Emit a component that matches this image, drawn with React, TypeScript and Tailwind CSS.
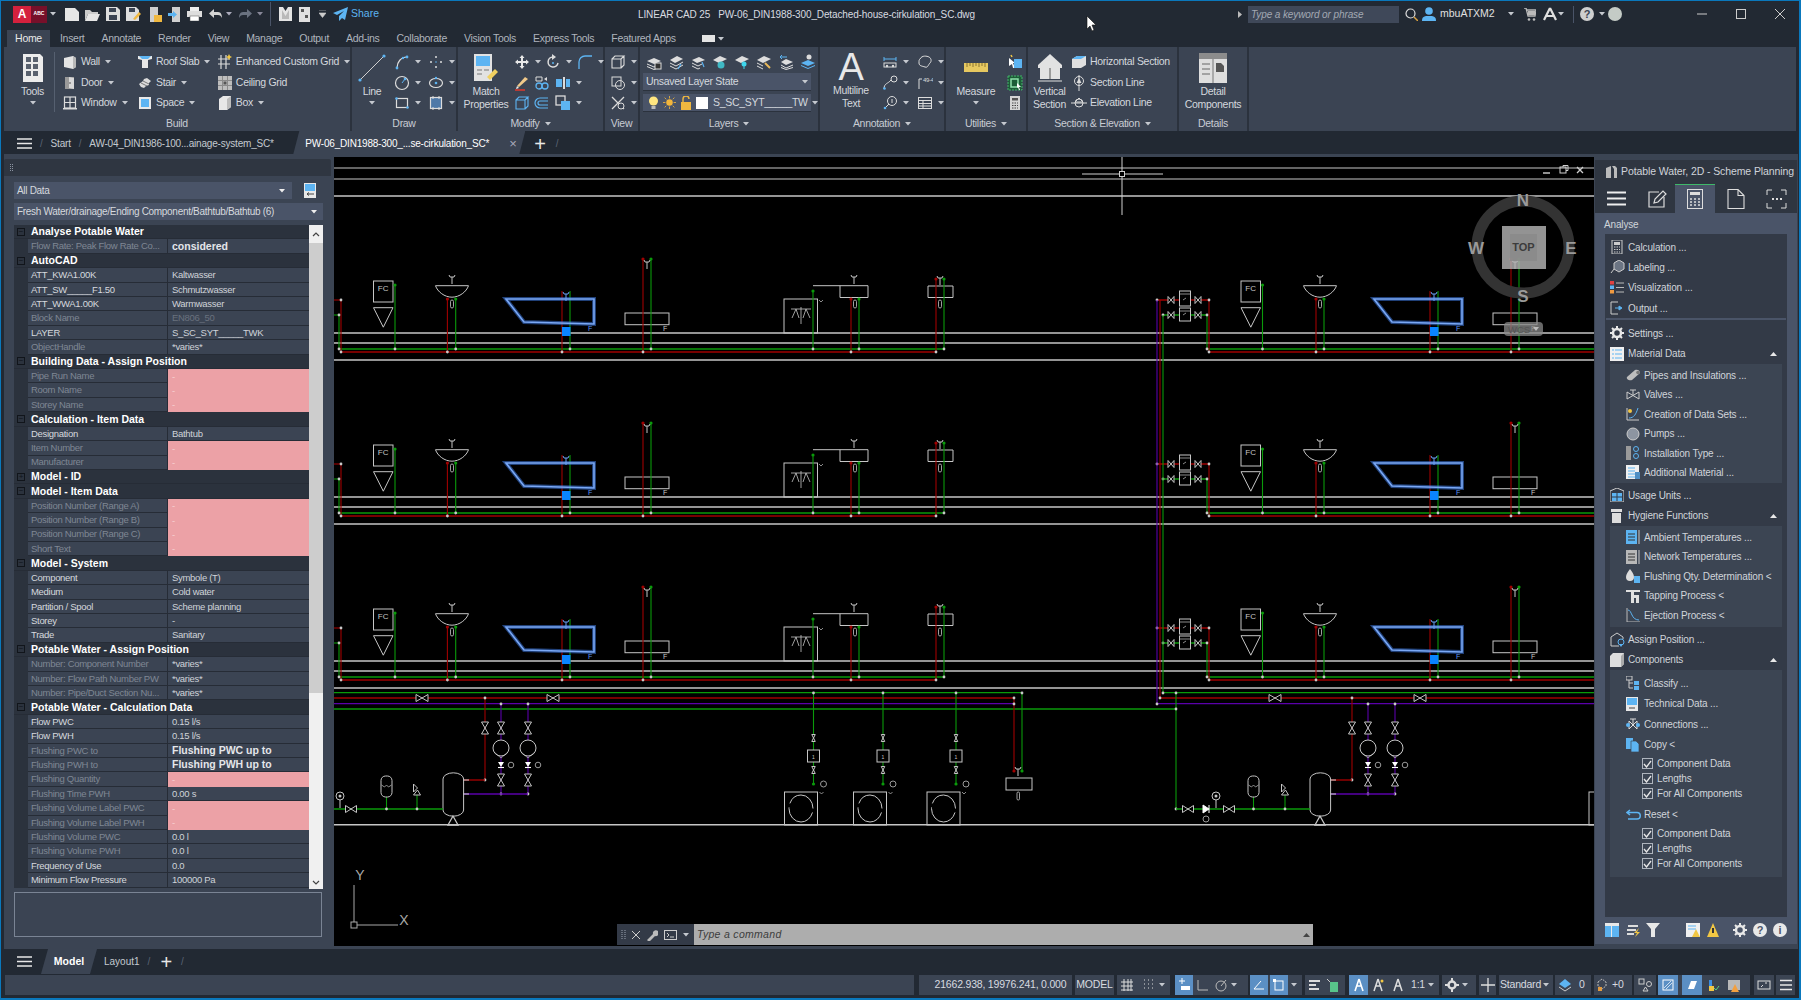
import React from 'react';

type P = { children?: React.ReactNode; w?: number; h?: number; vb?: string };
const S = ({ children, w = 16, h = 16, vb = '0 0 16 16' }: P) => (
  <svg width={w} height={h} viewBox={vb} className="shrink-0 block">{children}</svg>
);
const Arrow = ({ c = '#c5c9cf' }: { c?: string }) => (
  <svg width="6" height="4" viewBox="0 0 6 4" className="shrink-0"><path d="M0 0h6L3 3.5z" fill={c} /></svg>
);
const L = '#dcdcdc';
const B = '#5db4f2';
const st = { fill: 'none', stroke: L, strokeWidth: 1.2 };

const ic: Record<string, React.ReactNode> = {
  wall: <S><path d="M2 4l9-2 3 2v9l-3 2-9-2z" fill="#e4e4e4" /><path d="M11 2l3 2v9l-3 2z" fill="#b8b8b8" /></S>,
  door: <S><rect x="3" y="2" width="9" height="12" fill="#9a9a9a" /><path d="M7 2l5 1v11l-5-1z" fill="#d8d8d8" /><circle cx="8" cy="8" r=".8" fill="#444" /></S>,
  window: <S><rect x="2.5" y="2" width="11" height="11" {...st} /><path d="M2.5 7.5h11M8 2v11" {...st} /><rect x="1" y="13" width="14" height="1.5" fill={L} /></S>,
  roof: <S><path d="M1 2h14v3l-4 1v8H5V6L1 5z" fill="#e8e8e8" /><path d="M2 2h12l-3 3H5z" fill={B} /></S>,
  stair: <S><path d="M2 9l4-3 1-2 3-1 4 3-2 2v2l-3 1-2 2-3-1z" fill="#dcdcdc" /><path d="M4 8l6 3M6 6l6 3" stroke="#777" /></S>,
  space: <S><rect x="2" y="2" width="12" height="12" fill="#e8e8e8" /><rect x="4" y="4" width="8" height="8" fill={B} /></S>,
  grid: <S><path d="M1 5h12M1 10h12M4 1v14M9 1v14" {...st} /><path d="M12 0l1 2 2 1-2 1-1 2-1-2-2-1 2-1z" fill="#f2c744" /></S>,
  ceil: <S><rect x="1" y="1" width="14" height="14" fill="#bdbdbd" /><path d="M5.500 1v14M10.500 1v14M1 5.500h14M1 10.500h14" stroke="#8a8a8a" /><rect x="6.500" y="6.500" width="3" height="3" fill="#555" /></S>,
  box: <S><path d="M2 4l4-3h8v11l-4 3H2z" fill="#e8e8e8" /><path d="M10 4l4-3v11l-4 3z" fill="#bdbdbd" /></S>,
  poly: <S><path d="M3 14C3 8 7 3 13 3" {...st} /><circle cx="3" cy="14" r="1.4" fill={B} /><circle cx="9" cy="4" r="1.2" fill={B} /><circle cx="13" cy="3" r="1.4" fill={B} /></S>,
  pts: <S><circle cx="8" cy="3" r="1" fill={L} /><circle cx="3" cy="8" r="1" fill={L} /><circle cx="13" cy="8" r="1" fill={L} /><circle cx="8" cy="13" r="1" fill={L} /><circle cx="8" cy="8" r=".8" fill={B} /></S>,
  circ: <S><circle cx="8" cy="8" r="6.500" {...st} /><path d="M8 8l3-4" stroke={B} /><circle cx="11" cy="4" r="1.300" fill={B} /></S>,
  elli: <S><ellipse cx="8" cy="8" rx="6.500" ry="4.500" {...st} /><circle cx="8" cy="8" r="1.300" fill={B} /><circle cx="8" cy="3" r="1.200" fill={B} /></S>,
  rect: <S><rect x="2.500" y="3.500" width="11" height="9" {...st} /><circle cx="2.500" cy="3.500" r="1.300" fill={B} /><circle cx="13.500" cy="12.500" r="1.300" fill={B} /></S>,
  hatch: <S><rect x="3" y="3" width="10" height="10" fill="#4f79a8" /><rect x="2.500" y="2.500" width="11" height="11" {...st} /><path d="M5 1v3M11 1v3M5 12v3M11 12v3" stroke={L} /></S>,
  move: <S><path d="M8 1l2.500 3H9v3h3V5.500L15 8l-3 2.500V9H9v3h1.500L8 15l-2.500-3H7V9H4v1.500L1 8l3-2.500V7h3V4H5.500z" fill="#e8e8e8" /></S>,
  rot: <S><path d="M13 9a5 5 0 1 1-5-6" fill="none" stroke={L} strokeWidth="1.500" /><path d="M7 0l4 3-4 3z" fill={L} /><circle cx="8" cy="9" r="1" fill={B} /></S>,
  fil: <S><path d="M2 15V8a6 6 0 0 1 6-6h7" fill="none" stroke={B} strokeWidth="1.300" /></S>,
  pencil: <S><path d="M3 11l8-9 3 2-9 8z" fill="#f0c98a" /><path d="M1 15h10" stroke="#e0392b" strokeWidth="1.500" /><path d="M3 11l-1 3 3-1z" fill="#eee" /></S>,
  mir: <S><circle cx="5" cy="11" r="3" fill="none" stroke={B} strokeWidth="1.300" /><circle cx="11" cy="11" r="3" fill="none" stroke={B} strokeWidth="1.300" /><path d="M2 2h6v4H2z" fill="none" stroke={L} /><path d="M10 4l3-2v4z" fill={L} /></S>,
  str: <S><rect x="1" y="4" width="6" height="8" fill={B} /><rect x="8" y="2" width="2" height="12" fill={L} /><rect x="11" y="4" width="4" height="8" fill={B} /></S>,
  cube: <S><path d="M2 5h9v9H2zM2 5l3-3h9l-3 3M14 2v9l-3 3" fill="none" stroke={B} strokeWidth="1.100" /></S>,
  off: <S><path d="M14 3H6a5 5 0 0 0 0 10h8M14 6H6a2 2 0 0 0 0 4h8" fill="none" stroke={B} strokeWidth="1.200" /></S>,
  copy: <S><rect x="1" y="1" width="9" height="9" fill="none" stroke={L} strokeWidth="1.300" /><rect x="6" y="6" width="9" height="9" fill={B} /></S>,
  vcube: <S><path d="M2 5h9v9H2zM2 5l3-3h9l-3 3M14 2v9l-3 3" fill="none" stroke={L} strokeWidth="1.100" /></S>,
  vorb: <S><rect x="2" y="2" width="9" height="9" fill="none" stroke={L} /><circle cx="10" cy="10" r="4.500" fill="none" stroke={L} /></S>,
  vx: <S><path d="M2 2l12 12M14 2L2 14" stroke={L} strokeWidth="1.300" /><circle cx="11" cy="11" r="3" fill="#3b4453" stroke={L} /></S>,
  lay1: <S><path d="M1 7l7-3 7 3-7 3z" fill="#ddd" /><path d="M1 10l7 3 7-3M1 12.500l7 3 7-3" fill="none" stroke="#ddd" /><rect x="9" y="9" width="6" height="6" fill="#333" stroke="#ddd" /></S>,
  lay2: <S><path d="M2 6l7-4 6 3-8 4z" fill="#ddd" /><path d="M2 9l6 3 7-4M2 12l6 3 7-4" fill="none" stroke="#ddd" /><path d="M13 10l-3 5" stroke={B} strokeWidth="1.200" /></S>,
  lay3: <S><path d="M2 6l7-3 6 3-8 3z" fill="#ddd" /><path d="M2 9l6 3 4-2M2 12l6 3 2-1" fill="none" stroke="#ddd" /><path d="M12 8l2 5" stroke={B} strokeWidth="1.200" /></S>,
  lay4: <S><path d="M1 6l7-4 7 3-8 4z" fill="#ddd" /><circle cx="9" cy="11" r="3.500" fill="#3fb8c4" /></S>,
  lay5: <S><path d="M1 6l7-4 7 3-8 4z" fill="#ddd" /><circle cx="10" cy="10" r="2.500" fill="#3fd6ec" /><path d="M10 12v3" stroke="#3fd6ec" /></S>,
  lay6: <S><path d="M1 6l7-4 7 3-8 4z" fill="#ddd" /><path d="M1 9l6 3M1 12l6 3" stroke="#ddd" /><path d="M9 9l5 5" stroke="#e9b95b" strokeWidth="2" /></S>,
  lay7: <S><path d="M3 8l5-3 7 3-7 3z" fill="#ddd" /><path d="M3 11l5 3 7-3M3 13.500l5 2 7-2" fill="none" stroke="#ddd" /><path d="M2 3h7M2 3l2-2M2 3l2 2" stroke={B} fill="none" /></S>,
  lay8: <S><circle cx="9" cy="3" r="2.500" fill={L} /><path d="M1 9l7-3 7 3-7 3z" fill={B} /><path d="M1 11.500l7 3 7-3" fill="none" stroke={B} /></S>,
  dim: <S><path d="M2 5h12M2 3v4M14 3v4" stroke={B} fill="none" /><rect x="2" y="9" width="12" height="4" fill="none" stroke={L} /><circle cx="5" cy="12" r="1.200" fill={L} /><circle cx="11" cy="12" r="1.200" fill={L} /></S>,
  rev: <S><path d="M3 5c2-4 7-3 9-2s3 4 1 6-2 5-5 4-6-1-6-4 0-3 1-4z" fill="none" stroke={L} /></S>,
  lead: <S><path d="M2 14C2 8 6 9 9 5" fill="none" stroke={L} /><circle cx="2.500" cy="13.500" r="1.300" fill={B} /><circle cx="12" cy="4" r="3" fill="none" stroke={L} /></S>,
  tag: <S><path d="M2 14V4M2 4h3" stroke={L} fill="none" /><text x="6" y="7" fontSize="6" fill={L}>49-4</text></S>,
  ball: <S><circle cx="10" cy="6" r="4.500" fill="none" stroke={L} /><path d="M7 9l-4 4M10 4v4" stroke={L} /><circle cx="3" cy="13" r="1.300" fill={B} /></S>,
  table: <S><rect x="1.500" y="2.500" width="13" height="11" fill="none" stroke={L} /><path d="M1.500 5.500h13M1.500 8.500h13M1.500 11h13M6 5.500v8" stroke={L} /></S>,
  calc: <S><rect x="3" y="1" width="10" height="14" fill="#d4d4d4" /><rect x="5" y="3" width="6" height="2.500" fill="#555" /><path d="M5 8h1.500M7.500 8H9M10 8h1M5 10.500h1.500M7.500 10.500H9M10 10.500h1M5 13h1.500M7.500 13H9M10 13h1" stroke="#444" /></S>,
  cur1: <S><path d="M2 4l6 5-2 0 2 5-2 0-1-4-3 2z" fill="#fff" /><rect x="7" y="5" width="8" height="9" fill={B} /><path d="M4 1l1 2" stroke="#f2c744" strokeWidth="1.500" /></S>,
  cur2: <S><rect x="1" y="1" width="14" height="14" fill="#1c5d37" stroke="#45b36b" strokeDasharray="2 1" /><rect x="4" y="4" width="7" height="8" fill="none" stroke="#8fe0ac" strokeWidth="1.500" /><path d="M10 8l4 4-2 0 1 3-1 0-1-3-1 1z" fill="#fff" /></S>,
  hs: <S><path d="M1 5l5-3h9v9l-5 3H1z" fill="#dfdfdf" /><path d="M1 5l5-3h9l-5 3z" fill={B} /></S>,
  sl: <S><circle cx="8" cy="6" r="4.500" fill="none" stroke={L} /><path d="M8 0v16" stroke={L} /><path d="M8 3l2.500 5h-5z" fill={L} /></S>,
  el: <S><circle cx="8" cy="8" r="4" fill="none" stroke={L} /><path d="M0 8h16M8 3l-4 4h8z" stroke={L} fill="none" /></S>,
  hamb: <svg width="15" height="11" viewBox="0 0 15 11" className="shrink-0"><path d="M0 1h15M0 5.500h15M0 10h15" stroke="#e8e8e8" strokeWidth="1.500" /></svg>,
};

const Tool = ({ i, t, arrow, cls = '' }: { i: React.ReactNode; t: string; arrow?: boolean; cls?: string }) => (
  <div className={`flex items-center h-[20.5px] whitespace-nowrap ${cls}`}>
    {i}<span className="ml-[3px]">{t}</span>{arrow && <span className="ml-[5px]"><Arrow /></span>}
  </div>
);
const Cell = ({ i, a, cls = 'w-[20px]' }: { i: React.ReactNode; a?: boolean; cls?: string }) => (
  <div className={`flex items-center h-[20.5px] ${cls}`}>{i}{a && <span className="ml-[5px]"><Arrow /></span>}</div>
);
const Big = ({ i, t, cls, a }: { i: React.ReactNode; t: string[]; cls: string; a?: boolean }) => (
  <div className={`flex flex-col items-center shrink-0 leading-[13px] ${cls}`}>
    <div className="h-[31px] flex items-center justify-center">{i}</div>
    <div className="mt-[2px] text-center whitespace-nowrap">{t.map((x) => <div key={x}>{x}</div>)}</div>
    {a && <div className="mt-[3px]"><Arrow /></div>}
  </div>
);
const Panel = ({ cls, label, arrow, children }: { cls: string; label: string; arrow?: boolean; children?: React.ReactNode }) => (
  <div className={`flex flex-col shrink-0 border-r-[2px] border-[#2b323d] ${cls}`}>
    <div className="h-[69px] flex pt-[5px]">{children}</div>
    <div className="h-[15px] flex items-center justify-center text-[#c8ccd3] gap-[5px]">{label}{arrow && <Arrow />}</div>
  </div>
);

function Ribbon() {
  return (
    <div className="h-[84px] ml-[3px] mr-[3px] bg-[#3b4453] flex text-[10.500px] tracking-[-0.3px] text-[#d4d8de] shrink-0">
      <Panel cls="w-[348px]" label="Build">
        <Big cls="w-[47px] pl-[10px]" t={['Tools']} a i={<S w={22} h={30} vb="0 0 22 30"><path d="M1 1h17l3 3v25H1z" fill="#ececec" /><path d="M4 4h5v5H4zM11 4h5v5h-5zM4 11h5v5H4zM11 11h5v5h-5zM4 18h5v5H4zM11 18h5v5h-5z" fill="#59616e" /></S>} />
        <div className="w-px h-[60px] bg-[#566070] mr-[7px] ml-[3px]" />
        <div className="w-[75px]">
          <Tool i={ic.wall} t="Wall" arrow /><Tool i={ic.door} t="Door" arrow /><Tool i={ic.window} t="Window" arrow />
        </div>
        <div className="w-[80px]">
          <Tool i={ic.roof} t="Roof Slab" arrow /><Tool i={ic.stair} t="Stair" arrow /><Tool i={ic.space} t="Space" arrow />
        </div>
        <div>
          <Tool i={ic.grid} t="Enhanced Custom Grid" arrow /><Tool i={ic.ceil} t="Ceiling Grid" /><Tool i={ic.box} t="Box" arrow />
        </div>
      </Panel>
      <Panel cls="w-[106px]" label="Draw">
        <Big cls="w-[40px]" t={['Line']} a i={<S w={28} h={28} vb="0 0 28 28"><path d="M2 26L26 2" stroke="#cfcfcf" /><circle cx="2" cy="26" r="1.600" fill={B} /><circle cx="26" cy="2" r="1.600" fill={B} /></S>} />
        <div className="w-[34px] ml-[2px]"><Cell cls="w-[34px]" i={ic.poly} a /><Cell cls="w-[34px]" i={ic.circ} a /><Cell cls="w-[34px]" i={ic.rect} a /></div>
        <div className="w-[28px]"><Cell cls="w-[28px]" i={ic.pts} a /><Cell cls="w-[28px]" i={ic.elli} a /><Cell cls="w-[28px]" i={ic.hatch} a /></div>
      </Panel>
      <Panel cls="w-[147px]" label="Modify" arrow>
        <Big cls="w-[56px]" t={['Match', 'Properties']} i={<S w={26} h={30} vb="0 0 26 30"><rect x="1" y="1" width="18" height="27" fill="#e2e2e2" /><rect x="3" y="3" width="14" height="10" fill={B} /><path d="M4 17h5M4 21h5M11 17h5" stroke="#777" /><path d="M14 24l8-8 3 3-8 8z" fill="#f0d060" /></S>} />
        <div>
          <div className="flex"><Cell cls="w-[31px]" i={ic.move} a /><Cell cls="w-[32px]" i={ic.rot} a /><Cell cls="w-[24px]" i={ic.fil} a /></div>
          <div className="flex"><Cell cls="w-[20px]" i={ic.pencil} /><Cell cls="w-[21px]" i={ic.mir} /><Cell i={ic.str} a /></div>
          <div className="flex"><Cell cls="w-[20px]" i={ic.cube} /><Cell cls="w-[21px]" i={ic.off} /><Cell i={ic.copy} a /></div>
        </div>
      </Panel>
      <Panel cls="w-[35px]" label="View">
        <div className="ml-[5px]"><Cell i={ic.vcube} a /><Cell i={ic.vorb} a /><Cell i={ic.vx} a /></div>
      </Panel>
      <Panel cls="w-[180px]" label="Layers" arrow>
        <div className="ml-[3px]">
          <div className="flex h-[20px] items-center pl-[3px] gap-[6px]">{[ic.lay1, ic.lay2, ic.lay3, ic.lay4, ic.lay5, ic.lay6, ic.lay7, ic.lay8].map((x, k) => <span key={k}>{x}</span>)}</div>
          <div className="w-[168px] h-[18px] mt-px bg-[#4a5468] border-b border-[#2b323d] flex items-center justify-between px-[3px]"><span>Unsaved Layer State</span><Arrow /></div>
          <div className="w-[168px] h-[18px] mt-[3px] bg-[#4a5468] border-b border-[#2b323d] flex items-center pl-[5px] pr-[3px] gap-[4px]">
            <S w={11} h={14} vb="0 0 11 14"><circle cx="5.500" cy="5" r="4.500" fill="#ffe680" /><rect x="3.500" y="10" width="4" height="3" fill="#bbb" /></S>
            <S w={13} h={13} vb="0 0 16 16"><circle cx="8" cy="8" r="4" fill="#f2b63c" /><path d="M8 0v3M8 13v3M0 8h3M13 8h3M2 2l2 2M12 12l2 2M2 14l2-2M12 4l2-2" stroke="#f2b63c" /></S>
            <S w={12} h={14} vb="0 0 12 14"><rect x="1" y="6" width="10" height="8" fill="#f0b840" /><path d="M3 6V3a3 3 0 0 1 6 0" fill="none" stroke="#f0b840" strokeWidth="1.400" /></S>
            <div className="w-[12px] h-[12px] bg-white shrink-0" /><span className="flex-1 ml-px whitespace-nowrap">S_SC_SYT_____TW</span><Arrow />
          </div>
        </div>
      </Panel>
      <Panel cls="w-[126px]" label="Annotation" arrow>
        <div className="w-[62px] flex flex-col items-center">
          <div className="h-[31px] text-[38px] leading-[31px] text-[#e8e8e8]">A</div>
          <div className="text-center leading-[13px] mt-[1px]"><div>Multiline</div><div>Text</div></div>
        </div>
        <div className="w-[35px]"><Cell cls="w-[35px]" i={ic.dim} a /><Cell cls="w-[35px]" i={ic.lead} a /><Cell cls="w-[35px]" i={ic.ball} a /></div>
        <div><Cell i={ic.rev} a /><Cell i={ic.tag} a /><Cell i={ic.table} a /></div>
      </Panel>
      <Panel cls="w-[82px]" label="Utilities" arrow>
        <Big cls="w-[60px]" t={['Measure']} a i={<S w={24} h={9} vb="0 0 24 9"><rect width="24" height="9" fill="#e6c860" /><path d="M3 0v4M6 0v3M9 0v4M12 0v3M15 0v4M18 0v3M21 0v4" stroke="#8a7430" /></S>} />
        <div className="ml-[1px]"><Cell i={ic.cur1} /><Cell i={ic.cur2} /><Cell i={ic.calc} /></div>
      </Panel>
      <Panel cls="w-[151px]" label="Section & Elevation" arrow>
        <Big cls="w-[43px]" t={['Vertical', 'Section']} i={<S w={26} h={30} vb="0 0 26 30"><path d="M13 1L25 12v3H1v-3z" fill="#e2e2e2" /><rect x="3" y="15" width="20" height="11" fill="#e2e2e2" /><path d="M13 15v11" stroke="#555" /><path d="M1 28h24" stroke="#e2e2e2" /></S>} />
        <div><Tool i={ic.hs} t="Horizontal Section" /><Tool i={ic.sl} t="Section Line" /><Tool i={ic.el} t="Elevation Line" /></div>
      </Panel>
      <Panel cls="w-[70px]" label="Details">
        <Big cls="w-[68px]" t={['Detail', 'Components']} i={<S w={28} h={30} vb="0 0 28 30"><rect x="0" y="0" width="28" height="30" fill="#dedede" /><rect width="28" height="6" fill="#8c8c8c" /><path d="M3 11h8M3 16h8M3 21h8" stroke="#666" /><path d="M14 6v24" stroke="#777" /><path d="M17 10h5l3 3v6h-8z" fill="#555" /></S>} />
      </Panel>
      <div className="flex-1" />
    </div>
  );
}

const TB = ({ w, children }: { w: string; children: React.ReactNode }) => <div className={`${w} flex justify-center items-center shrink-0`}>{children}</div>;

function TitleBar() {
  return (
    <div className="h-[29px] flex items-center shrink-0 text-[11px] text-[#d4d8de] pl-[12px] pb-[3px]">
      <div className="w-[34px] h-[17px] flex shrink-0">
        <div className="w-[18px] bg-[#d4213d] flex items-center justify-center text-white font-bold text-[12px]">A</div>
        <div className="w-[16px] bg-[#76102a] text-white text-[5px] font-bold flex items-center justify-center">ABC</div>
      </div>
      <TB w="w-[12px]"><Arrow /></TB>
      <TB w="w-[20px] ml-[3px]"><S w={14} h={13} vb="0 0 14 13"><path d="M0 0h10l4 4v9H0z" fill="#e6e6e6" /></S></TB>
      <TB w="w-[20px]"><S w={15} h={13} vb="0 0 15 13"><path d="M0 2h5l2 2h6v2H3l-3 7z" fill="#ccc" /><path d="M3 6h12l-3 7H0z" fill="#e6e6e6" /></S></TB>
      <TB w="w-[20px] ml-[1px]"><S w={14} h={14} vb="0 0 14 14"><path d="M0 0h11l3 3v11H0z" fill="#dedede" /><rect x="3" y="1" width="7" height="4" fill="#3b4453" /><rect x="3" y="8" width="8" height="5" fill="#3b4453" /></S></TB>
      <TB w="w-[20px]"><S w={15} h={14} vb="0 0 15 14"><path d="M0 0h10l3 3v11H0z" fill="#dedede" /><rect x="3" y="1" width="6" height="4" fill="#3b4453" /><path d="M7 12l6-7 2 2-6 6z" fill="#f0b840" /></S></TB>
      <TB w="w-[20px] ml-[2px]"><S w={13} h={15} vb="0 0 13 15"><rect x="1" y="0" width="8" height="15" fill="#d0d0d0" /><path d="M5 8h8v7H5z" fill="#f0b840" /></S></TB>
      <TB w="w-[20px] -ml-[1px]"><S w={13} h={15} vb="0 0 13 15"><rect x="4" y="0" width="8" height="15" fill="#d0d0d0" /><path d="M0 6h5V4l4 3.500-4 3.500V9H0z" fill={B} /></S></TB>
      <TB w="w-[20px]"><S w={15} h={14} vb="0 0 15 14"><rect x="3" y="0" width="9" height="4" fill="#eee" /><rect x="0" y="4" width="15" height="6" fill="#ddd" /><rect x="3" y="9" width="9" height="5" fill="#fff" stroke="#555" strokeWidth=".5" /></S></TB>
      <TB w="w-[20px] ml-[1px]"><S w={13} h={10} vb="0 0 13 10"><path d="M5 0v3h4c3 0 4 3 4 6-1-2-2-3-4-3H5v3L0 4.500z" fill="#d4d4d4" /></S></TB>
      <TB w="w-[12px] -ml-[2px]"><Arrow c="#aab" /></TB>
      <TB w="w-[20px]"><S w={13} h={10} vb="0 0 13 10"><path d="M8 0v3H4C1 3 0 6 0 9c1-2 2-3 4-3h4v3l5-4.500z" fill="#6a7280" /></S></TB>
      <TB w="w-[12px] -ml-[1px]"><Arrow c="#889" /></TB>
      <div className="w-px h-[24px] bg-[#4a5468] ml-[4px] mr-[7px]" />
      <TB w="w-[14px]"><S w={13} h={14} vb="0 0 13 14"><path d="M0 0h4l2.500 4L9 0h4v14H0z" fill="#e4e4e4" /><path d="M3 3l3.500 6L10 3v9H3z" fill="#555" opacity=".3" /></S></TB>
      <TB w="w-[26px] -ml-[1px]"><S w={11} h={15} vb="0 0 11 15"><path d="M0 0h11v15H0z" fill="#e0e0e0" /><rect x="2" y="2" width="3" height="3" fill="#555" /><rect x="6" y="8" width="3" height="3" fill="#555" /></S></TB>
      <TB w="w-[10px]"><S w={7} h={8} vb="0 0 7 8"><path d="M0 0h7M0 3h7L3.500 7.500z" fill="#ccc" stroke="#ccc" strokeWidth=".6" /></S></TB>
      <div className="ml-[6px] flex items-center gap-[3px] text-[#5db4f2] text-[10.500px]"><S w={15} h={14} vb="0 0 15 14"><path d="M15 0L0 6l4 2 7-4-5 5v5l3-3 3 2z" fill={B} /></S><span>Share</span></div>
      <div className="absolute left-[637px] top-[6px] text-[10px] text-[#d8dbe0] whitespace-pre tracking-[-0.13px]">LINEAR CAD 25   PW-06_DIN1988-300_Detached-house-cirkulation_SC.dwg</div>
      <div className="ml-auto flex items-center pr-[14px]">
        <svg width="4" height="7" viewBox="0 0 4 7" className="mr-[6px]"><path d="M0 0l4 3.500L0 7z" fill="#bbb" /></svg>
        <div className="w-[151px] h-[17px] bg-[#3f4859] italic text-[#a3a9b3] text-[10px] flex items-center pl-[3px] tracking-[-0.1px]">Type a keyword or phrase</div>
        <div className="w-[20px] ml-[2px] flex justify-center"><S w={13} h={13} vb="0 0 13 13"><circle cx="5.500" cy="5.500" r="4.500" fill="none" stroke="#ddd" strokeWidth="1.200" /><path d="M9 9l4 4" stroke="#d8a040" strokeWidth="1.500" /></S></div>
        <div className="ml-[1px]"><S w={14} h={14} vb="0 0 14 14"><circle cx="7" cy="4" r="3.800" fill={B} /><path d="M0 14c0-5 3-5 7-5s7 0 7 5z" fill={B} /></S></div>
        <span className="ml-[4px] w-[68px] text-[#e0e0e0] text-[10.500px]">mbuATXM2</span><Arrow />
        <div className="ml-[10px]"><S w={12} h={13} vb="0 0 12 13"><path d="M0 0h2l2 8h7l1-6H3" fill="none" stroke="#bbb" strokeWidth="1.300" /><path d="M4 3h7v4H4z" fill="#bbb" /><circle cx="5" cy="11.500" r="1.300" fill="#bbb" /><circle cx="10" cy="11.500" r="1.300" fill="#bbb" /></S></div>
        <div className="ml-[7px]"><S w={14} h={14} vb="0 0 14 14"><path d="M7 1L1 13M7 1l6 12M3 9h8" fill="none" stroke="#e0e0e0" strokeWidth="2.200" /></S></div>
        <div className="ml-[1px]"><Arrow /></div>
        <div className="w-px h-[17px] bg-[#4a5468] ml-[9px] mr-[6px]" />
        <div className="w-[14px] h-[14px] rounded-full bg-[#cfcfcf] text-[#3b4453] font-bold text-[11px] flex items-center justify-center">?</div>
        <div className="ml-[5px]"><Arrow /></div>
        <div className="ml-[3px] w-[14px] h-[14px] rounded-full bg-[#c4cbc6]" />
        <div className="ml-[75px]"><S w={10} h={10} vb="0 0 10 10"><path d="M0 5h10" stroke="#ccc" /></S></div>
        <div className="ml-[29px]"><S w={10} h={10} vb="0 0 10 10"><rect x=".5" y=".5" width="9" height="9" fill="none" stroke="#ccc" /></S></div>
        <div className="ml-[29px]"><S w={10} h={10} vb="0 0 10 10"><path d="M0 0l10 10M10 0L0 10" stroke="#ccc" /></S></div>
      </div>
    </div>
  );
}

function RibbonTabs() {
  const names = ['Insert', 'Annotate', 'Render', 'View', 'Manage', 'Output', 'Add-ins', 'Collaborate', 'Vision Tools', 'Express Tools', 'Featured Apps'];
  return (
    <div className="h-[17px] ml-[6px] flex items-center text-[10.500px] tracking-[-0.3px] text-[#aeb4bd] shrink-0">
      <div className="w-[43px] h-[17px] bg-[#3b4453] text-[#e8e8e8] flex items-center justify-center">Home</div>
      <div className="flex items-center ml-[10px] gap-[17px] whitespace-nowrap">{names.map((n) => <span key={n}>{n}</span>)}</div>
      <div className="ml-[26px] flex items-center gap-[3px]"><div className="w-[13px] h-[7px] bg-[#e4e4e4]" /><Arrow /></div>
    </div>
  );
}

function DocTabs() {
  return (
    <div className="h-[23px] flex items-center text-[10px] tracking-[-0.2px] text-[#c4c9d0] shrink-0 pl-[16px] whitespace-nowrap">
      <div className="mt-[2px]">{ic.hamb}</div>
      <span className="ml-[8px] mt-[2px] text-[#5a6474]">/</span>
      <span className="ml-[8px] mt-[2px]">Start</span>
      <span className="ml-[8px] mt-[2px] text-[#5a6474]">/</span>
      <span className="ml-[8px] mt-[2px] w-[186px]">AW-04_DIN1986-100...ainage-system_SC*</span>
      <div className="ml-[18px] w-[232px] h-[23px] bg-[#3b4453] flex items-center pt-[2px] pl-[12px] [clip-path:polygon(6px_0,100%_0,calc(100%-6px)_100%,0_100%)] text-white">
        <span className="w-[200px]">PW-06_DIN1988-300_...se-cirkulation_SC*</span><span className="ml-[4px] text-[#aab] text-[13px]">×</span>
      </div>
      <span className="ml-[9px] mt-[2px] text-[#e8e8e8] text-[20px] leading-[20px]">+</span>
      <span className="ml-[10px] mt-[2px] text-[#5a6474]">/</span>
    </div>
  );
}

type Row = { g?: string; plus?: boolean; n?: string; v?: string; nd?: boolean; vd?: boolean; p?: boolean; b?: boolean };
const rows: Row[] = [
  { g: 'Analyse Potable Water' },
  { n: 'Flow Rate: Peak Flow Rate Co...', nd: true, v: 'considered', b: true },
  { g: 'AutoCAD' },
  { n: 'ATT_KWA1.00K', v: 'Kaltwasser' },
  { n: 'ATT_SW_____F1.50', v: 'Schmutzwasser' },
  { n: 'ATT_WWA1.00K', v: 'Warmwasser' },
  { n: 'Block Name', nd: true, v: 'EN806_50', vd: true },
  { n: 'LAYER', v: 'S_SC_SYT_____TWK' },
  { n: 'ObjectHandle', nd: true, v: '*varies*' },
  { g: 'Building Data - Assign Position' },
  { n: 'Pipe Run Name', nd: true, p: true },
  { n: 'Room Name', nd: true, p: true },
  { n: 'Storey Name', nd: true, p: true },
  { g: 'Calculation - Item Data' },
  { n: 'Designation', v: 'Bathtub' },
  { n: 'Item Number', nd: true, p: true },
  { n: 'Manufacturer', nd: true, p: true },
  { g: 'Model - ID', plus: true },
  { g: 'Model - Item Data' },
  { n: 'Position Number (Range A)', nd: true, p: true },
  { n: 'Position Number (Range B)', nd: true, p: true },
  { n: 'Position Number (Range C)', nd: true, p: true },
  { n: 'Short Text', nd: true, p: true },
  { g: 'Model - System' },
  { n: 'Component', v: 'Symbole (T)' },
  { n: 'Medium', v: 'Cold water' },
  { n: 'Partition / Spool', v: 'Scheme planning' },
  { n: 'Storey', v: '-' },
  { n: 'Trade', v: 'Sanitary' },
  { g: 'Potable Water - Assign Position' },
  { n: 'Number: Component Number', nd: true, v: '*varies*' },
  { n: 'Number: Flow Path Number PW', nd: true, v: '*varies*' },
  { n: 'Number: Pipe/Duct Section Nu...', nd: true, v: '*varies*' },
  { g: 'Potable Water - Calculation Data' },
  { n: 'Flow PWC', v: '0.15 l/s' },
  { n: 'Flow PWH', v: '0.15 l/s' },
  { n: 'Flushing PWC to', nd: true, v: 'Flushing PWC up to', b: true },
  { n: 'Flushing PWH to', nd: true, v: 'Flushing PWH up to', b: true },
  { n: 'Flushing Quantity', nd: true, p: true },
  { n: 'Flushing Time PWH', nd: true, v: '0.00 s' },
  { n: 'Flushing Volume Label PWC', nd: true, p: true },
  { n: 'Flushing Volume Label PWH', nd: true, p: true },
  { n: 'Flushing Volume PWC', nd: true, v: '0.0 l' },
  { n: 'Flushing Volume PWH', nd: true, v: '0.0 l' },
  { n: 'Frequency of Use', v: '0.0' },
  { n: 'Minimum Flow Pressure', v: '100000 Pa' },
];

const PropGrid = () => (
  <div className="flex ml-[10px] mt-[5px] w-[309px] h-[664px] shrink-0">
    <div className="w-[295px] text-[9.500px] tracking-[-0.3px] leading-none">
      {rows.map((r, k) =>
        r.g ? (
          <div key={k} className="h-[14.420px] bg-[#2b323d] flex items-center border-b border-[#262c36]">
            <div className="w-[14px] flex justify-center"><div className="w-[8px] h-[8px] border border-[#11151b] flex items-center justify-center text-[#11151b] text-[8px] leading-none">{r.plus ? '+' : '−'}</div></div>
            <span className="ml-[3px] text-white font-bold text-[10.500px] tracking-normal">{r.g}</span>
          </div>
        ) : (
          <div key={k} className="h-[14.420px] flex">
            <div className="w-[14px] bg-[#2b323d]" />
            <div className={`w-[140px] bg-[#3b4453] border-b border-r border-[#262c36] flex items-center pl-[3px] whitespace-nowrap overflow-hidden ${r.nd ? 'text-[#7f8794]' : 'text-[#d6d9de]'}`}>{r.n}</div>
            {r.p ? (
              <div className="w-[141px] bg-[#eca1a6] text-[#f7d0d2] flex items-center pl-[4px]">-</div>
            ) : (
              <div className={`w-[141px] bg-[#3b4453] border-b border-[#262c36] flex items-center pl-[4px] whitespace-nowrap ${r.b ? 'font-bold text-[#e4e6ea] text-[10.500px] tracking-normal' : r.vd ? 'text-[#69717e]' : 'text-[#cfd3d9]'}`}>{r.v}</div>
            )}
          </div>
        ),
      )}
    </div>
    <div className="w-[14px] bg-[#f0f0f0] flex flex-col items-center">
      <div className="h-[18px] flex items-center"><svg width="8" height="5" viewBox="0 0 8 5"><path d="M1 4l3-3 3 3" fill="none" stroke="#444" strokeWidth="1.200" /></svg></div>
      <div className="h-[450px] w-full bg-[#cdcdcd]" />
      <div className="flex-1" />
      <div className="h-[14px] flex items-center"><svg width="8" height="5" viewBox="0 0 8 5"><path d="M1 1l3 3 3-3" fill="none" stroke="#444" strokeWidth="1.200" /></svg></div>
    </div>
  </div>
);

function LeftPanel() {
  return (
    <div className="w-[327px] mt-[5px] mb-[3px] shrink-0 flex flex-col">
      <div className="h-[17px] bg-[#2f3641] flex items-center pl-[6px] rounded-t-[2px]">
        <svg width="3" height="7" viewBox="0 0 3 7"><path d="M.5 0v7M2.500 0v7" stroke="#8a92a0" strokeDasharray="1 1" /></svg>
      </div>
      <div className="flex-1 bg-[#3b4453] text-[10px] tracking-[-0.3px] text-[#d6d9de]">
        <div className="flex items-center mt-[6px] ml-[10px]">
          <div className="w-[278px] h-[17px] bg-[#4a5468] flex items-center justify-between pl-[3px] pr-[7px]"><span>All Data</span><Arrow c="#eee" /></div>
          <div className="ml-[12px]"><S w={12} h={15} vb="0 0 12 15"><rect width="12" height="15" fill="#e8e8e8" /><rect x="1" y="1" width="10" height="7" fill={B} /><path d="M3 11h7M3 11l2-1.500M3 11l2 1.500" stroke="#444" fill="none" /></S></div>
        </div>
        <div className="w-[309px] h-[17px] ml-[10px] mt-[4px] bg-[#4a5468] flex items-center justify-between pl-[3px] pr-[6px]"><span>Fresh Water/drainage/Ending Component/Bathtub/Bathtub (6)</span><Arrow c="#eee" /></div>
        <PropGrid />
        <div className="ml-[10px] mt-[3px] w-[308px] h-[45px] border border-[#7a8494]" />
      </div>
    </div>
  );
}

const R = ({ i, t, cls, arrow }: { i: React.ReactNode; t: string; cls: string; arrow?: boolean }) => (
  <div className={`flex items-center whitespace-nowrap ${cls}`}>
    <div className="w-[18px] flex items-center">{i}</div>{t}
    {arrow && <svg width="7" height="4" viewBox="0 0 7 4" className="ml-auto mr-[5px]"><path d="M0 4l3.500-4L7 4z" fill="#e8e8e8" /></svg>}
  </div>
);
const Chk = ({ t, cls }: { t: string; cls: string }) => (
  <div className={`flex items-center pl-[32px] ${cls}`}>
    <div className="w-[11px] h-[11px] border border-[#aeb4bd] flex items-center justify-center mr-[4px]"><svg width="9" height="8" viewBox="0 0 9 8"><path d="M1 4l2.500 3L8 1" fill="none" stroke="#e8e8e8" strokeWidth="1.300" /></svg></div>{t}
  </div>
);
const r = {
  calc: <S w={14} h={14} vb="0 0 14 14"><rect x="2" y="0" width="10" height="14" fill="none" stroke="#ccc" /><rect x="4" y="2" width="6" height="3" fill="#ccc" /><path d="M4 7h6M4 9.500h6M4 12h6" stroke="#ccc" strokeDasharray="1.500 1" /></S>,
  label: <S w={15} h={14} vb="0 0 15 14"><path d="M9 0l5 3v6l-5 3-5-3V3z" fill="#6c7583" stroke="#ccc" /><path d="M4 9l-3 4" stroke="#ccc" /></S>,
  vis: <S w={15} h={13} vb="0 0 15 13"><rect y="0" width="4" height="3.500" fill="#e04040" /><rect y="4.500" width="4" height="3.500" fill={B} /><rect y="9" width="4" height="3.500" fill="#f09a40" /><path d="M6 2h8M6 6.500h8M6 11h8" stroke="#bbb" /></S>,
  out: <S w={14} h={14} vb="0 0 14 14"><path d="M8 1H1v12h7" fill="none" stroke="#ccc" /><path d="M5 7h6M9 5l3 2-3 2z" stroke={B} fill={B} /></S>,
  gear: <S w={14} h={14} vb="0 0 14 14"><circle cx="7" cy="7" r="4" fill="none" stroke="#e8e8e8" strokeWidth="2.500" /><path d="M7 0v3M7 11v3M0 7h3M11 7h3M2 2l2 2M10 10l2 2M2 12l2-2M10 4l2-2" stroke="#e8e8e8" strokeWidth="2" /></S>,
  mat: <S w={14} h={14} vb="0 0 14 14"><rect width="14" height="14" fill="#f0f0f0" /><path d="M2 3h2M5 3h7M2 7h2M5 7h7M2 11h2M5 11h7" stroke={B} /></S>,
  pipe: <S w={15} h={13} vb="0 0 15 13"><path d="M1 8l8-7c2-1 5 0 5 3l-8 7c-3 1-6-1-5-3z" fill="#bdbdbd" /><circle cx="12" cy="3.500" r="1.800" fill="#777" /></S>,
  valve: <S w={14} h={12} vb="0 0 14 12"><path d="M1 3v7l12-7v7zM7 6V1M4 1h6" fill="none" stroke="#ccc" /></S>,
  crea: <S w={14} h={14} vb="0 0 14 14"><path d="M1 1v12h12" fill="none" stroke="#ccc" /><path d="M3 11c5 0 7-4 9-10" fill="none" stroke={B} /><circle cx="4" cy="4" r="2" fill="#f2c744" /></S>,
  pump: <S w={14} h={14} vb="0 0 14 14"><circle cx="7" cy="7" r="6" fill="#8d95a1" stroke="#ccc" /></S>,
  inst: <S w={14} h={14} vb="0 0 14 14"><rect width="5" height="14" fill="#9a9a9a" /><circle cx="10" cy="3" r="2.500" fill="none" stroke={B} /><circle cx="10" cy="10" r="2.500" fill="none" stroke={B} /></S>,
  add: <S w={14} h={14} vb="0 0 14 14"><rect width="13" height="14" fill="#f0f0f0" /><path d="M2 3h7M2 6h7M2 9h7M2 12h7" stroke={B} /><rect x="9" y="7" width="5" height="7" fill="#4f8fc4" /></S>,
  usage: <S w={14} h={14} vb="0 0 14 14"><path d="M7 0l7 3v11H0V3z" fill="none" stroke="#ccc" /><rect x="2" y="5" width="4.500" height="3.500" fill={B} /><rect x="7.500" y="5" width="4.500" height="3.500" fill={B} /><rect x="2" y="9.500" width="4.500" height="3.500" fill={B} /><rect x="7.500" y="9.500" width="4.500" height="3.500" fill={B} /></S>,
  hyg: <S w={13} h={14} vb="0 0 13 14"><rect x="1" y="0" width="11" height="3" fill="#ddd" /><path d="M2 4h9v10H2z" fill="#ddd" /></S>,
  amb: <S w={14} h={14} vb="0 0 14 14"><rect width="11" height="14" fill={B} /><path d="M2 4h7M2 7h7M2 10h7" stroke="#333" /><path d="M13 0v14" stroke="#ccc" /></S>,
  net: <S w={14} h={14} vb="0 0 14 14"><rect width="11" height="14" fill="#b8b8b8" /><path d="M2 4h7M2 7h7M2 10h7" stroke="#333" /><path d="M13 0v14" stroke="#ccc" /></S>,
  fl: <S w={14} h={14} vb="0 0 14 14"><path d="M4 0c2 3 4 5 4 8a4 4 0 0 1-8 0c0-3 2-5 4-8z" fill="#ddd" /><rect x="8" y="7" width="6" height="7" fill={B} /></S>,
  tap: <S w={14} h={14} vb="0 0 14 14"><path d="M0 1h14v2H8v3h5v8h-3V9H8v5H5V3H0z" fill="#e0e0e0" /></S>,
  ej: <S w={14} h={14} vb="0 0 14 14"><path d="M1 0v14h13" fill="none" stroke="#bbb" /><path d="M2 2c4 0 3 10 11 10" fill="none" stroke={B} /></S>,
  pos: <S w={15} h={15} vb="0 0 15 15"><path d="M1 14V5l6-4 6 4v2" fill="none" stroke="#ccc" /><path d="M1 14h8" stroke="#ccc" /><circle cx="11" cy="10" r="3" fill="none" stroke={B} /><path d="M11 15l-2-3h4z" fill={B} /></S>,
  comp: <S w={14} h={14} vb="0 0 14 14"><path d="M0 3l3-3h11v11l-3 3H0z" fill="#ddd" /><path d="M11 3l3-3v11l-3 3z" fill="#aaa" /></S>,
  cla: <S w={14} h={14} vb="0 0 14 14"><rect width="6" height="4" fill="none" stroke="#ccc" /><path d="M3 4v8h4M3 7h4" fill="none" stroke="#ccc" /><rect x="8" y="5" width="5" height="4" fill={B} /><rect x="8" y="10" width="5" height="4" fill={B} /></S>,
  tech: <S w={12} h={14} vb="0 0 12 14"><rect width="12" height="14" fill="#e8e8e8" /><rect x="1" y="1" width="10" height="7" fill={B} /><path d="M3 11h6" stroke="#444" /></S>,
  con: <S w={14} h={13} vb="0 0 14 13"><path d="M3 3l8 8V3l-8 8z" fill="none" stroke="#ddd" /><path d="M7 7V1M4 1h6" stroke="#ddd" /><circle cx="2" cy="7" r="2" fill={B} /><circle cx="12" cy="7" r="2" fill={B} /></S>,
  copy: <S w={14} h={14} vb="0 0 14 14"><rect width="7" height="11" fill={B} /><path d="M5 3h5l3 3v8H5z" fill={B} stroke="#3c4553" strokeWidth=".7" /></S>,
  reset: <S w={15} h={11} vb="0 0 15 11"><path d="M4 1L1 3.500 4 6M1 3.500h10a3 3 0 0 1 0 6.500H2" fill="none" stroke={B} strokeWidth="1.500" /></S>,
};

function RightPanel() {
  return (
    <div className="w-[202px] ml-[1px] mt-[6px] shrink-0 flex flex-col text-[10px] text-[#d0d4da] tracking-[-0.15px]">
      <div className="h-[24px] bg-[#2f3641] flex items-center pl-[11px] gap-[4px]">
        <S w={11} h={12} vb="0 0 11 12"><path d="M0 2l5-2v12H0zM6 0h3l2 2v10H8V3z" fill="#bbb" /></S>
        <span className="text-[10.500px] tracking-[-0.1px] whitespace-nowrap">Potable Water, 2D - Scheme Planning</span>
      </div>
      <div className="h-[29px] bg-[#2f3641] flex">
        <div className="w-[40px] flex items-center justify-center pl-[2px]"><svg width="19" height="15" viewBox="0 0 19 15"><path d="M0 1.500h19M0 7.500h19M0 13.500h19" stroke="#eee" strokeWidth="1.800" /></svg></div>
        <div className="w-[40px] flex items-center justify-center pl-[4px]"><svg width="20" height="20" viewBox="0 0 20 20"><path d="M17 8v10H2V3h10" fill="none" stroke="#ddd" strokeWidth="1.200" /><path d="M7 14l1-4 8-8 3 3-8 8z" fill="none" stroke="#ddd" strokeWidth="1.200" /></svg></div>
        <div className="w-[40px] bg-[#4a5468] border-t-[1px] border-[#3fb96a] flex items-center justify-center"><svg width="16" height="20" viewBox="0 0 16 20"><rect x=".5" y=".5" width="15" height="19" fill="none" stroke="#ddd" /><rect x="3" y="3" width="10" height="3" fill="#ddd" /><path d="M3 10h10M3 13h10M3 16h10" stroke="#ddd" strokeWidth="1.600" strokeDasharray="2 2" /></svg></div>
        <div className="w-[42px] flex items-center justify-center"><svg width="18" height="20" viewBox="0 0 18 20"><path d="M1 .5h10l6 6v13H1zM11 .5v6h6" fill="none" stroke="#ddd" strokeWidth="1.100" /></svg></div>
        <div className="w-[21px] ml-[9px] flex items-center"><svg width="21" height="20" viewBox="0 0 21 20"><path d="M6 1H1v5M15 1h5v5M1 14v5h5M20 14v5h-5" fill="none" stroke="#ddd" /><path d="M6 10h2M10 10h2M14 10h2" stroke="#ddd" strokeWidth="2" /></svg></div>
      </div>
      <div className="flex-1 bg-[#4a5468] flex flex-col mb-[5px]">
        <div className="h-[21px] flex items-center pl-[9px] pt-[2px]">Analyse</div>
        <div className="ml-[10px] w-[182px] h-[683px] bg-[#333a47] pl-[5px] pr-[5px] pt-[3px]">
          <R i={r.calc} t="Calculation ..." cls="h-[20.300px]" />
          <R i={r.label} t="Labeling ..." cls="h-[20.300px]" />
          <R i={r.vis} t="Visualization ..." cls="h-[20.300px]" />
          <R i={r.out} t="Output ..." cls="h-[20.300px]" />
          <div className="h-[2px] bg-[#4a5468] -mx-[4px] mb-[3px]" />
          <R i={r.gear} t="Settings ..." cls="h-[20.300px]" />
          <R arrow i={r.mat} t="Material Data" cls="h-[20.300px]" />
          <div className="bg-[#3c4553] h-[119px] pl-[16px] pt-[2px]">
            <R i={r.pipe} t="Pipes and Insulations ..." cls="h-[19.400px]" />
            <R i={r.valve} t="Valves ..." cls="h-[19.400px]" />
            <R i={r.crea} t="Creation of Data Sets ..." cls="h-[19.400px]" />
            <R i={r.pump} t="Pumps ..." cls="h-[19.400px]" />
            <R i={r.inst} t="Installation Type ..." cls="h-[19.400px]" />
            <R i={r.add} t="Additional Material ..." cls="h-[19.400px]" />
          </div>
          <R i={r.usage} t="Usage Units ..." cls="h-[20.500px] mt-[2px]" />
          <R arrow i={r.hyg} t="Hygiene Functions" cls="h-[20.500px]" />
          <div className="bg-[#3c4553] h-[101px] pl-[16px] pt-[2px]">
            <R i={r.amb} t="Ambient Temperatures ..." cls="h-[19.400px]" />
            <R i={r.net} t="Network Temperatures ..." cls="h-[19.400px]" />
            <R i={r.fl} t="Flushing Qty. Determination <" cls="h-[19.400px]" />
            <R i={r.tap} t="Tapping Process <" cls="h-[19.400px]" />
            <R i={r.ej} t="Ejection Process <" cls="h-[19.400px]" />
          </div>
          <R i={r.pos} t="Assign Position ..." cls="h-[21px] mt-[2px]" />
          <R arrow i={r.comp} t="Components" cls="h-[20px]" />
          <div className="bg-[#3c4553] h-[207px] pl-[16px] pt-[3px]">
            <R i={r.cla} t="Classify ..." cls="h-[20.500px]" />
            <R i={r.tech} t="Technical Data ..." cls="h-[20.500px]" />
            <R i={r.con} t="Connections ..." cls="h-[20.500px]" />
            <R i={r.copy} t="Copy <" cls="h-[20.500px]" />
            <Chk t="Component Data" cls="h-[15px] -ml-[16px] mt-[1.500px]" />
            <Chk t="Lengths" cls="h-[15px] -ml-[16px]" />
            <Chk t="For All Components" cls="h-[15px] -ml-[16px]" />
            <R i={r.reset} t="Reset <" cls="h-[21px] mt-[3px]" />
            <Chk t="Component Data" cls="h-[15px] -ml-[16px] mt-[1px]" />
            <Chk t="Lengths" cls="h-[15px] -ml-[16px]" />
            <Chk t="For All Components" cls="h-[15px] -ml-[16px]" />
          </div>
        </div>
        <div className="flex items-center h-[26px] pl-[10px]">
          <S w={14} h={14} vb="0 0 14 14"><rect width="14" height="14" fill="#e8e8e8" /><rect y="3" width="6" height="11" fill={B} /><rect x="7" y="3" width="7" height="11" fill={B} /></S>
          <div className="ml-[7px]"><S w={14} h={13} vb="0 0 14 13"><path d="M2 2h10M1 6h9M1 10h7" stroke="#ddd" strokeWidth="1.800" /><path d="M13 4L8 9h3l-2 4 5-5h-3z" fill="#f2c744" /></S></div>
          <div className="ml-[6px]"><S w={14} h={14} vb="0 0 14 14"><path d="M0 0h14L9 6v8H5V6z" fill="#e8e8e8" /></S></div>
          <div className="ml-[26px]"><S w={14} h={14} vb="0 0 14 14"><rect width="14" height="14" fill="#f0f0f0" /><path d="M2 3h8M2 6h8" stroke={B} /><path d="M10 6l4 8H6z" fill="#f2c744" /></S></div>
          <div className="ml-[6px]"><S w={14} h={14} vb="0 0 14 14"><path d="M7 0l6 14H1z" fill="#f2c744" /><rect x="6" y="5" width="2" height="5" fill="#333" /></S></div>
          <div className="ml-[13px]"><S w={14} h={14} vb="0 0 14 14"><circle cx="7" cy="7" r="4" fill="none" stroke="#e8e8e8" strokeWidth="2.500" /><path d="M7 0v3M7 11v3M0 7h3M11 7h3M2 2l2 2M10 10l2 2M2 12l2-2M10 4l2-2" stroke="#e8e8e8" strokeWidth="2" /></S></div>
          <div className="ml-[6px] w-[14px] h-[14px] rounded-full bg-[#e8e8e8] text-[#4a5468] text-[11px] font-bold flex items-center justify-center">?</div>
          <div className="ml-[6px] w-[14px] h-[14px] rounded-full bg-[#e8e8e8] text-[#4a5468] text-[11px] font-bold flex items-center justify-center">i</div>
        </div>
      </div>
    </div>
  );
}

const W = '#c6c6c6';
const GR = '#0a9a0a';
const RD = '#a00000';
const PU = '#5a00aa';
const Dot = ({ x, y }: { x: number; y: number }) => <circle cx={x} cy={y} r={1.4} fill="#c9c9c9" />;
const Fauc = ({ x, y, c = W }: { x: number; y: number; c?: string }) => (
  <path d={`M${x - 3} ${y}l1 2h4l1-2M${x} ${y + 2}v7`} fill="none" stroke={c} strokeWidth="1" />
);
const HV = ({ x, y, w = 11 }: { x: number; y: number; w?: number }) => (
  <path d={`M${x - w / 2} ${y - 3.500}v7L${x + w / 2} ${y - 3.500}v7z`} fill="#000" stroke={W} strokeWidth="1" />
);
const VV = ({ x, y, h = 12, w = 7 }: { x: number; y: number; h?: number; w?: number }) => (
  <path d={`M${x - w / 2} ${y - h / 2}h${w}L${x - w / 2} ${y + h / 2}h${w}z`} fill="#000" stroke={W} strokeWidth="1" />
);
const V = ({ x, y1, y2, c }: { x: number; y1: number; y2: number; c: string }) => <line x1={x} x2={x} y1={y1} y2={y2} stroke={c} strokeWidth="1.100" />;
const H = ({ y, x1, x2, c, sw = 1.100 }: { y: number; x1: number; x2: number; c: string; sw?: number }) => <line x1={x1} x2={x2} y1={y} y2={y} stroke={c} strokeWidth={sw} />;
const Basin = ({ x, red, gr }: { x: number; red: number; gr: number }) => (
  <g>
    <path d={`M${x - 16.500} 285.700h33c-2 6-9 11.500-16.500 11.500s-14.500-5.500-16.500-11.500z`} fill="none" stroke={W} />
    <Fauc x={x} y={275} />
    <rect x={x - 1.500} y={300} width={3} height={8} rx={1.500} fill="none" stroke={W} strokeWidth=".8" />
    <V x={red} y1={299} y2={352} c={RD} /><V x={gr} y1={299} y2={349} c={GR} />
    <circle cx={red} cy={299} r={1.600} fill={RD} /><circle cx={gr} cy={299} r={1.600} fill={GR} />
    <Dot x={red} y={352} /><Dot x={gr} y={349} />
  </g>
);

const FC = ({ x }: { x: number }) => (
  <g>
    <rect x={x} y={281} width={19.500} height={21} fill="none" stroke={W} />
    <text x={x + 9.700} y={291} fontSize="8" fill={W} textAnchor="middle">FC</text>
    <path d={`M${x} 307.700h19.500l-9.700 19.500z`} fill="none" stroke={W} />
    <V x={x + 21.500} y1={285} y2={349} c={GR} />
    <circle cx={x + 21.500} cy={285} r={1.600} fill={GR} /><Dot x={x + 21.500} y={349} />
  </g>
);
const Tub = ({ x }: { x: number }) => (
  <g>
    <V x={x + 56} y1={291} y2={352} c={RD} /><V x={x + 64} y1={291} y2={349} c={GR} />
    <path d={`M${x} 299h88v25l-70-2z`} fill="none" stroke="#3f7ff0" strokeWidth="4" opacity=".5" />
    <path d={`M${x} 299h88v25l-70-2z`} fill="none" stroke="#7aa8f5" strokeWidth="1.600" />
    <Fauc x={x + 60} y={292} c="#6aa0f5" />
    <rect x={x + 56} y={327} width={8.500} height={9} fill="#0a84ff" />
    <text x={x + 82} y={331} fontSize="7" fill="#5b98f5">F</text>
    <Dot x={x + 56} y={352} /><Dot x={x + 64} y={349} />
  </g>
);
const WC = ({ x, red, gr }: { x: number; red: number; gr: number }) => (
  <g>
    <rect x={x} y={313} width={44} height={11.700} fill="none" stroke={W} />
    <V x={red} y1={259} y2={352} c={RD} /><V x={gr} y1={259} y2={349} c={GR} />
    <circle cx={red} cy={259} r={1.600} fill={RD} /><circle cx={gr} cy={259} r={1.600} fill={GR} />
    <Fauc x={(red + gr) / 2} y={260} />
    <text x={x + 38} y={331} fontSize="7" fill={W}>F</text>
    <Dot x={red} y={352} /><Dot x={gr} y={349} />
  </g>
);
const Floor = ({ dy }: { dy: number }) => (
  <g transform={`translate(0 ${dy})`}>
    <H y={333} x1={334} x2={1594} c={W} sw={1.300} /><H y={343} x1={334} x2={1594} c={W} sw={1.300} /><H y={360} x1={334} x2={1594} c={W} sw={1.300} />
    <H y={349} x1={339} x2={944} c={GR} sw={1.400} /><H y={352} x1={341} x2={936} c={RD} sw={1.600} />
    <H y={349} x1={1207} x2={1594} c={GR} sw={1.400} /><H y={352} x1={1209} x2={1594} c={RD} sw={1.600} />
    <H y={300} x1={334} x2={341} c={RD} /><V x={341} y1={300} y2={352} c={RD} />
    <H y={315} x1={334} x2={339} c={GR} /><V x={339} y1={315} y2={349} c={GR} />
    <Dot x={341} y={300} /><Dot x={339} y={315} /><Dot x={339} y={349} /><Dot x={341} y={352} />
    <FC x={373.500} />
    <Basin x={452} red={447.400} gr={455.700} />
    <Tub x={506} />
    <WC x={625} red={643} gr={651} />
    <rect x={784} y={299} width={33.500} height={34} fill="none" stroke={W} />
    <path d="M801 307v17M791 309h20M796 309l-4 9M806 309l4 9M796 309l3 9M806 309l-3 9" fill="none" stroke={W} strokeWidth=".8" />
    <path d="M819 300l2 2 2-2" fill="none" stroke={W} strokeWidth=".7" />
    <V x={813} y1={291} y2={349} c={GR} /><circle cx={813} cy={291} r={1.600} fill={GR} /><Dot x={813} y={349} />
    <path d="M813 285.700h27v11.800h28v-11.800h-28" fill="none" stroke={W} />
    <Fauc x={854} y={275} />
    <rect x={853.500} y={300} width={3} height={8} rx={1.500} fill="none" stroke={W} strokeWidth=".8" />
    <V x={851} y1={299} y2={352} c={RD} /><V x={859} y1={299} y2={349} c={GR} />
    <circle cx={851} cy={299} r={1.600} fill={RD} /><circle cx={859} cy={299} r={1.600} fill={GR} /><Dot x={851} y={352} /><Dot x={859} y={349} />
    <path d="M953 286h-25v11.500h25v-11.500" fill="none" stroke={W} />
    <Fauc x={940} y={276} />
    <rect x={938.500} y={300} width={3} height={8} rx={1.500} fill="none" stroke={W} strokeWidth=".8" />
    <V x={936} y1={279} y2={352} c={RD} /><V x={944} y1={279} y2={349} c={GR} />
    <circle cx={936} cy={279} r={1.600} fill={RD} /><circle cx={944} cy={279} r={1.600} fill={GR} /><Dot x={936} y={352} /><Dot x={944} y={349} />
    <H y={300} x1={1157} x2={1209} c={RD} sw={1.400} /><H y={315} x1={1163} x2={1207} c={GR} sw={1.400} />
    <V x={1209} y1={300} y2={352} c={RD} /><V x={1207} y1={315} y2={349} c={GR} />
    <Dot x={1157} y={300} /><Dot x={1163} y={315} /><Dot x={1209} y={300} /><Dot x={1207} y={315} /><Dot x={1207} y={349} /><Dot x={1209} y={352} />
    <HV x={1171} y={300} w={6} /><HV x={1198} y={300} w={6} /><HV x={1171} y={315} w={6} /><HV x={1198} y={315} w={6} />
    <rect x={1179.500} y={291} width={11} height={15} fill="#000" stroke={W} /><rect x={1179.500} y={308} width={11} height={13} fill="#000" stroke={W} />
    <path d="M1179.500 294h11M1179.500 311h11M1183 300l3-2M1183 315l3-2" stroke={W} strokeWidth=".7" />
    <FC x={1241} />
    <Basin x={1320} red={1316} gr={1324} />
    <Tub x={1374} />
    <WC x={1493} red={1511} gr={1519} />
  </g>
);
const Pump = ({ x }: { x: number }) => (
  <g>
    <circle cx={x} cy={748} r={8} fill="#000" stroke={W} />
    <path d={`M${x - 7} 752l7 6 7-6`} fill="none" stroke={W} strokeWidth=".7" />
    <path d={`M${x - 3} 762h6l-3 5z`} fill="#fff" /><H y={767.500} x1={x - 3} x2={x + 3} c="#fff" />
    <circle cx={x + 10} cy={765} r={2.800} fill="#000" stroke="#999" />
  </g>
);
const Plant = ({ tx, r2, p1, p2, }: { tx: number; r2: number; p1: number; p2: number }) => (
  <g>
    <V x={r2} y1={698} y2={780} c={RD} /><V x={p1} y1={704} y2={794} c={PU} /><V x={p2} y1={704} y2={794} c={PU} />
    <Dot x={r2} y={698} /><Dot x={p1} y={704} /><Dot x={p2} y={704} /><Dot x={r2} y={780} /><Dot x={p1} y={794} /><Dot x={p2} y={794} />
    <VV x={r2} y={728} /><VV x={p1} y={728} /><VV x={p2} y={728} /><VV x={p1} y={780} /><VV x={p2} y={780} />
    <Pump x={p1} /><Pump x={p2} />
    <H y={780} x1={tx + 20} x2={r2} c={RD} sw={1.400} /><H y={794} x1={tx + 20} x2={p2} c={PU} sw={1.400} />
    <path d={`M${tx} 779a10 6 0 0 1 20.600 0v31a10 6 0 0 1-20.600 0z`} fill="#000" stroke={W} />
    <path d={`M${tx + 10} 816l-5 9h10z`} fill="none" stroke={W} strokeWidth="1.300" />
    <H y={780} x1={tx + 20} x2={tx + 26} c={W} /><H y={794} x1={tx + 20} x2={tx + 26} c={W} />
  </g>
);
const Exp = ({ x, rx, }: { x: number; rx: number }) => (
  <g>
    <V x={x} y1={797} y2={809} c={GR} /><Dot x={x} y={809} />
    <rect x={x - 5.500} y={776} width={11} height={21} rx={4.500} fill="none" stroke={W} />
    <path d={`M${x - 5} 785l3 2 2-2 2 2 3-2`} fill="none" stroke={W} strokeWidth=".7" />
    <V x={rx} y1={795} y2={809} c={GR} /><Dot x={rx} y={809} />
    <path d={`M${rx - 3.500} 795l4-5 3 5zM${rx - 3.500} 784v8l4-4z`} fill="none" stroke={W} />
  </g>
);
const Gauge = ({ x }: { x: number }) => (
  <g><circle cx={x} cy={796} r={4} fill="none" stroke={W} /><circle cx={x} cy={796} r={1.500} fill={W} /><path d={`M${x} 800v8`} stroke={W} /></g>
);
const Wash = ({ x, drop }: { x: number; drop: number }) => (
  <g>
    <V x={drop} y1={693} y2={784} c={GR} />
    <Dot x={drop} y={693} /><circle cx={drop} cy={784} r={1.600} fill={GR} />
    <VV x={drop} y={738} h={7} w={3.500} /><VV x={drop} y={770} h={7} w={3.500} />
    <rect x={drop - 6} y={750} width={12} height={12} fill="#000" stroke={W} />
    <text x={drop} y={758.500} fontSize="5" fill={W} textAnchor="middle">1</text>
    <circle cx={drop + 10} cy={784} r={3} fill="#000" stroke="#999" />
    <rect x={x} y={792} width={33} height={33} fill="none" stroke={W} />
    <ellipse cx={x + 16.500} cy={808.500} rx={12} ry={13.500} fill="none" stroke={W} strokeDasharray="37 4" strokeDashoffset="-4" />
    <path d={`M${x + 35} 792l2 2 2-2`} fill="none" stroke={W} strokeWidth=".7" />
  </g>
);

function Drawing() {
  return (
    <div className="w-[1260px] mt-[3px] mb-[3px] bg-black relative shrink-0 overflow-hidden">
      <svg viewBox="334 157 1260 789" width="1260" height="789" className="block">
        <H y={168} x1={334} x2={1594} c={W} sw={1.200} /><H y={179} x1={334} x2={1594} c={W} sw={1.200} /><H y={196} x1={334} x2={1594} c={W} sw={1.300} />
        <Floor dy={0} /><Floor dy={164} /><Floor dy={328} />
        <V x={1157} y1={300} y2={704} c={PU} /><V x={1160} y1={300} y2={698} c={RD} /><V x={1163} y1={315} y2={693} c={GR} />
        <H y={692.700} x1={334} x2={1022} c={GR} sw={1.300} /><H y={698} x1={334} x2={1014} c={RD} sw={1.500} /><H y={703.700} x1={334} x2={1014} c={PU} sw={1.300} /><H y={709} x1={334} x2={1176} c={GR} sw={1.500} />
        <H y={692.700} x1={1163} x2={1594} c={GR} sw={1.300} /><H y={698} x1={1160} x2={1594} c={RD} sw={1.500} /><H y={703.700} x1={1157} x2={1594} c={PU} sw={1.300} />
        <V x={1176} y1={693} y2={809} c={GR} />
        <Dot x={1163} y={693} /><Dot x={1160} y={698} /><Dot x={1157} y={704} /><Dot x={1176} y={693} /><Dot x={1176} y={709} /><Dot x={1176} y={809} />
        <HV x={422} y={698} w={12} /><HV x={553} y={698} w={12} /><HV x={1275} y={698} w={12} /><HV x={1420} y={698} w={12} />
        <H y={824.700} x1={334} x2={1594} c={W} sw={1.400} />
        <Plant tx={443} r2={485} p1={501} p2={528} />
        <Plant tx={1310} r2={1352} p1={1368} p2={1395} />
        <H y={809} x1={334} x2={443} c={GR} sw={1.500} /><H y={809} x1={1176} x2={1310} c={GR} sw={1.500} />
        <HV x={351} y={809} w={11} /><Gauge x={340} /><Exp x={386.500} rx={417} />
        <HV x={1188} y={809} w={11} /><path d="M1203 805v8l6-4zM1209 805v8" fill="#fff" stroke="#fff" /><Gauge x={1216} /><HV x={1229} y={809} w={11} /><Exp x={1253.500} rx={1285} />
        <circle cx={1206} cy={819} r={3} fill="#000" stroke="#999" />
        <Wash x={784.500} drop={813.500} /><Wash x={853.500} drop={883} /><Wash x={927} drop={956} />
        <V x={1014} y1={698} y2={771} c={RD} /><V x={1022} y1={693} y2={771} c={GR} />
        <Dot x={1014} y={698} /><Dot x={1014} y={704} /><Dot x={1022} y={693} />
        <circle cx={1014} cy={771} r={1.600} fill={RD} /><circle cx={1022} cy={771} r={1.600} fill={GR} />
        <Fauc x={1018} y={767} />
        <rect x={1006} y={778} width={26} height={12} fill="none" stroke={W} />
        <rect x={1017} y={792} width={2.500} height={8} rx={1.200} fill="none" stroke={W} strokeWidth=".8" />
        <rect x={1589} y={792} width={8} height={33} fill="none" stroke={W} />
        <path d="M1122 157v58M1082 174h81" stroke="#d0d0d0" /><rect x={1119.500} y={171.500} width={5} height={5} fill="#000" stroke="#d0d0d0" />
        <path d="M1543 173h7" stroke="#d0d0d0" strokeWidth="1.400" /><rect x={1560} y={167} width={6} height={6} fill="none" stroke="#d0d0d0" /><path d="M1563 167v-1.500h5v5h-2" fill="none" stroke="#d0d0d0" /><path d="M1577 167l6 6M1583 167l-6 6" stroke="#d0d0d0" strokeWidth="1.300" />
        <circle cx={1523} cy={247} r={46} fill="none" stroke="#333333" strokeWidth="11" />
        <rect x={1502} y={226} width={44} height={43} fill="#b3b3b3" opacity=".82" />
        <rect x={1510} y={234} width={27} height={27} fill="#8a8a8a" opacity=".85" />
        <text x={1523.500} y={251} fontSize="11" fontWeight="700" fill="#3c3c3c" textAnchor="middle">TOP</text>
        <g fontSize="17" fontWeight="700" fill="#9a9a9a" textAnchor="middle">
          <text x={1523} y={206}>N</text><text x={1523} y={302}>S</text><text x={1476} y={254}>W</text><text x={1571} y={254}>E</text>
        </g>
        <rect x={1504} y={322} width={39} height={14} rx={4} fill="#8a8a8a" opacity=".75" />
        <text x={1508} y={332.500} fontSize="9.500" fill="#555">WCS</text><path d="M1533 327h6l-3 4z" fill="#bbb" />
        <path d="M354 885v40h44" fill="none" stroke="#a8a8a8" /><rect x={351} y={922} width={6} height={6} fill="#000" stroke="#a8a8a8" />
        <text x={360} y={880} fontSize="14" fill="#a8a8a8" textAnchor="middle">Y</text><text x={404} y={925} fontSize="14" fill="#a8a8a8" textAnchor="middle">X</text>
      </svg>
      <div className="absolute left-[283px] top-[767px] w-[696px] h-[21px] flex items-center bg-[#adadad] text-[10.500px]">
        <div className="w-[77px] h-full bg-[#333a47] flex items-center pl-[4px] gap-[6px] shrink-0">
          <svg width="5" height="11" viewBox="0 0 5 11"><path d="M1 1v9M4 1v9" stroke="#8a92a0" strokeWidth="1.200" strokeDasharray="1 1" /></svg>
          <svg width="8" height="8" viewBox="0 0 8 8"><path d="M0 0l8 8M8 0L0 8" stroke="#ccc" /></svg>
          <svg width="12" height="12" viewBox="0 0 12 12"><path d="M1 11l6-6a3 3 0 1 1 2 2l-6 6z" fill="#bbb" /></svg>
          <svg width="13" height="10" viewBox="0 0 13 10"><rect x=".5" y=".5" width="12" height="9" fill="none" stroke="#ccc" /><path d="M3 3l2 2-2 2M6 7h4" stroke="#ccc" fill="none" /></svg>
          <Arrow />
        </div>
        <span className="ml-[3px] italic text-[#3c3c3c] tracking-[.3px]">Type a command</span>
        <svg width="7" height="4" viewBox="0 0 7 4" className="ml-auto mr-[3px]"><path d="M0 4l3.500-4L7 4z" fill="#444" /></svg>
      </div>
    </div>
  );
}

function ModelTabs() {
  return (
    <div className="h-[25px] flex items-center text-[10px] text-[#c4c9d0] pl-[16px] shrink-0">
      {ic.hamb}
      <div className="ml-[9px] w-[56px] h-[25px] bg-[#3b4453] text-white font-bold text-[10.500px] flex items-center justify-center [clip-path:polygon(7px_0,100%_0,calc(100%-7px)_100%,0_100%)]">Model</div>
      <span className="ml-[7px]">Layout1</span>
      <span className="ml-[8px] text-[#5a6474]">/</span>
      <span className="ml-[10px] text-[#e8e8e8] text-[20px] leading-[20px]">+</span>
      <span className="ml-[9px] text-[#5a6474]">/</span>
    </div>
  );
}

const Pill = ({ cls, children }: { cls: string; children?: React.ReactNode }) => (
  <div className={`h-[20px] bg-[#3b4453] flex items-center shrink-0 ${cls}`}>{children}</div>
);
const On = ({ children, cls = 'w-[18px]' }: { children: React.ReactNode; cls?: string }) => (
  <div className={`h-full bg-[#5b8fc4] flex items-center justify-center shrink-0 ${cls}`}>{children}</div>
);
const Sm = ({ children }: { children: React.ReactNode }) => <svg width="14" height="14" viewBox="0 0 14 14" className="shrink-0">{children}</svg>;

function StatusBar() {
  const a = <span className="mx-[3px]"><Arrow /></span>;
  return (
    <div className="h-[24px] flex pl-[4px] pt-px text-[10.500px] text-[#d8dbe0] whitespace-nowrap shrink-0 tracking-[-0.2px]">
      <Pill cls="w-[909px]" />
      <Pill cls="w-[153px] ml-[5px] justify-center"><span className="pl-[10px]">21662.938, 19976.241, 0.000</span></Pill>
      <Pill cls="w-[39px] ml-[3px] justify-center">MODEL</Pill>
      <Pill cls="w-[53px] ml-[3px] pl-[3px]">
        <Sm><path d="M1 4h12M1 8h12M1 12h12M4 1v12M8 1v12M11 1v12" stroke="#ddd" /></Sm>
        <span className="ml-[8px]"><Sm><path d="M2 2h1M6 2h1M10 2h1M2 6h1M6 6h1M10 6h1M2 10h1M6 10h1M10 10h1" stroke="#ddd" /></Sm></span>{a}
      </Pill>
      <Pill cls="w-[73px] ml-[5px]">
        <On><Sm><path d="M2 3h6M5 0v6" stroke="#fff" /><rect x="4" y="8" width="9" height="4" fill="#fff" /></Sm></On>
        <span className="ml-[3px]"><Sm><path d="M2 2v10h10" stroke="#bbb" fill="none" /></Sm></span>
        <span className="ml-[4px]"><Sm><circle cx="7" cy="8" r="5" stroke="#bbb" fill="none" /><path d="M7 8l5-6" stroke="#bbb" /></Sm></span>{a}
      </Pill>
      <Pill cls="w-[52px] ml-[2px]">
        <On><Sm><path d="M2 11h10M2 11l7-8" stroke="#fff" fill="none" /></Sm></On>
        <div className="w-[2px]" />
        <On><Sm><rect x="3" y="3" width="8" height="9" stroke="#fff" fill="none" /><rect x="1" y="1" width="3" height="3" fill="#fff" /></Sm></On>{a}
      </Pill>
      <Pill cls="w-[40px] ml-[3px] pl-[3px] gap-[4px]">
        <Sm><path d="M1 3h11M1 7h7M1 11h10" stroke="#ddd" strokeWidth="2" /></Sm>
        <Sm><rect x="4" y="4" width="8" height="10" fill="#58c48a" /><path d="M1 1l3 3" stroke="#ccc" /></Sm>
      </Pill>
      <Pill cls="w-[90px] ml-[4px]">
        <On cls="w-[19px]"><Sm><path d="M7 1L3 13M7 1l4 12M4 8h6" stroke="#fff" fill="none" strokeWidth="1.600" /></Sm></On>
        <span className="ml-[3px]"><Sm><path d="M7 1L3 13M7 1l4 12M4 8h6" stroke="#ddd" fill="none" strokeWidth="1.500" /><circle cx="11" cy="3" r="1.500" fill="#f2c744" /></Sm></span>
        <span className="ml-[6px]"><Sm><path d="M7 1L3 13M7 1l4 12M4 8h6" stroke="#ddd" fill="none" strokeWidth="1.500" /></Sm></span>
        <span className="ml-[6px]">1:1</span>{a}
      </Pill>
      <Pill cls="w-[34px] ml-[3px] pl-[3px]"><Sm><circle cx="7" cy="7" r="3.500" fill="none" stroke="#ddd" strokeWidth="2.500" /><path d="M7 0v3M7 11v3M0 7h3M11 7h3" stroke="#ddd" strokeWidth="2" /></Sm><span className="ml-[3px]"><Arrow /></span></Pill>
      <Pill cls="w-[17px] ml-[3px] justify-center"><Sm><path d="M7 0v14M0 7h14" stroke="#e0e0e0" strokeWidth="1.300" /></Sm></Pill>
      <Pill cls="w-[54px] ml-[3px] pl-[1px] gap-[2px]">Standard<Arrow /></Pill>
      <Pill cls="w-[36px] ml-[2px] pl-[3px] gap-[7px]"><Sm><path d="M1 6l6-5 6 5-6 4z" fill="#5db4f2" /><path d="M1 9l6 4 6-4" stroke="#ccc" fill="none" /></Sm>0</Pill>
      <Pill cls="w-[38px] ml-[3px] pl-[2px] gap-[2px]"><Sm><path d="M2 4l4-3 4 3v4l-4 3-4-3z" stroke="#bbb" fill="none" strokeDasharray="2 1" /><rect x="2" y="9" width="4" height="4" fill="#e09a40" /></Sm><span>+0</span></Pill>
      <Pill cls="w-[22px] ml-[2px] justify-center"><Sm><rect x="1" y="1" width="5" height="5" stroke="#ccc" fill="none" /><circle cx="11" cy="6" r="2.500" stroke="#ccc" fill="none" /><path d="M5 13l2.500-4 2.500 4z" stroke="#ccc" fill="none" /></Sm></Pill>
      <Pill cls="w-[92px] ml-[2px]">
        <On cls="w-[20px]"><Sm><rect x="2" y="2" width="10" height="10" fill="none" stroke="#fff" /><path d="M3 10l7-7M5 11l6-6" stroke="#fff" strokeWidth=".7" /></Sm></On>
        <div className="w-[4px]" />
        <On cls="w-[20px]"><Sm><path d="M3 11l3-8h6l-3 8z" fill="#fff" /></Sm></On>
        <span className="ml-[4px]"><Sm><path d="M3 2h3v8H3z" fill="#3b8de0" /><rect x="3" y="8" width="5" height="5" fill="#f2c744" /><path d="M8 10l2 2 3-4" stroke="#5cd07f" fill="none" /></Sm></span>
        <span className="ml-[7px]"><Sm><rect x="1" y="2" width="12" height="10" fill="#b8b8b8" /><path d="M8 6l4 8H4z" fill="#f2a040" /></Sm></span>
      </Pill>
      <Pill cls="w-[20px] ml-[4px] justify-center"><Sm><rect x="1" y="3" width="12" height="8" stroke="#ddd" fill="none" /><path d="M4 9l2-2M8 5h2" stroke="#ddd" /></Sm></Pill>
      <Pill cls="w-[19px] ml-[2px] justify-center"><Sm><path d="M1 2.500h12M1 7h12M1 11.500h12" stroke="#e8e8e8" strokeWidth="1.400" /></Sm></Pill>
    </div>
  );
}

export default function App() {
  return (
    <div className="w-[1801px] h-[1000px] relative overflow-hidden bg-[#222933] border-t border-l border-r-[2px] border-b-[2px] border-[#0a78bc] flex flex-col [font-family:'Liberation_Sans',Arial,sans-serif]">
      <TitleBar />
      <RibbonTabs />
      <Ribbon />
      <DocTabs />
      <div className="h-[795px] ml-[3px] mr-[1px] flex bg-[#3b4453] shrink-0">
        <LeftPanel />
        <div className="w-[3px]" />
        <Drawing />
        <RightPanel />
      </div>
      <ModelTabs />
      <StatusBar />
      <svg width="12" height="17" viewBox="0 0 12 17" className="absolute left-[1085px] top-[14px]"><path d="M1 1v13l3-3 2 5 2-1-2-5h4z" fill="#fff" stroke="#111" strokeWidth=".6" /></svg>
    </div>
  );
}
